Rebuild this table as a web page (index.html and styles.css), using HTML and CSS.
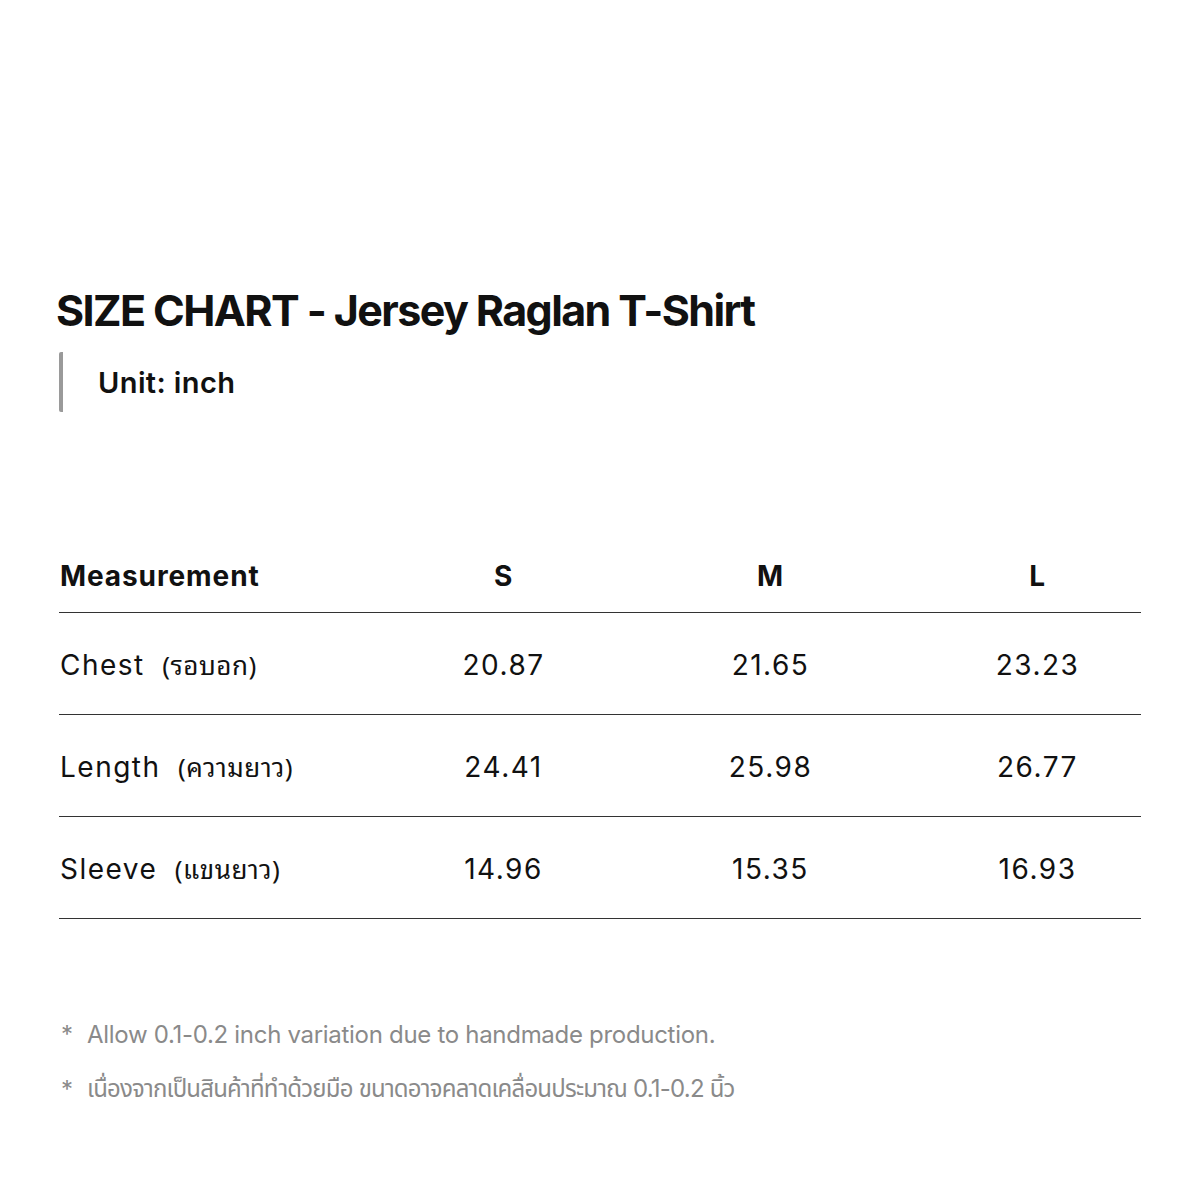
FILE: index.html
```html
<!DOCTYPE html>
<html lang="en">
<head>
<meta charset="utf-8">
<link rel="stylesheet" href="styles.css">
</head>
<body>
<main class="page">
  <h1 class="title">SIZE CHART - Jersey Raglan T-Shirt</h1>
  <div class="unit"><span class="unit-text">Unit: inch</span></div>
  <div class="table">
    <div class="row head">
      <div class="cell name">Measurement</div>
      <div class="cell">S</div>
      <div class="cell">M</div>
      <div class="cell last">L</div>
    </div>
    <div class="row">
      <div class="cell name">Chest <span class="th">(รอบอก)</span></div>
      <div class="cell">20.87</div>
      <div class="cell">21.65</div>
      <div class="cell last">23.23</div>
    </div>
    <div class="row">
      <div class="cell name">Length <span class="th">(ความยาว)</span></div>
      <div class="cell">24.41</div>
      <div class="cell">25.98</div>
      <div class="cell last">26.77</div>
    </div>
    <div class="row">
      <div class="cell name">Sleeve <span class="th">(แขนยาว)</span></div>
      <div class="cell">14.96</div>
      <div class="cell">15.35</div>
      <div class="cell last">16.93</div>
    </div>
  </div>
  <ul class="notes">
    <li><span class="star">*</span><span>Allow 0.1-0.2 inch variation due to handmade production.</span></li>
    <li><span class="star">*</span><span class="thai-note">เนื่องจากเป็นสินค้าที่ทำด้วยมือ ขนาดอาจคลาดเคลื่อนประมาณ 0.1-0.2 นิ้ว</span></li>
  </ul>
</main>
</body>
</html>
```
FILE: styles.css
```css
html, body {
  margin: 0;
  padding: 0;
  background: #ffffff;
}
body {
  font-family: Inter, "Noto Sans", "Noto Sans Thai", sans-serif;
  color: #111111;
}
.page {
  padding: 284px 59px 0 59px;
}
.title {
  margin: 0 0 0 -3px;
  font-size: 43px;
  font-weight: 700;
  letter-spacing: -1.6px;
  line-height: 52px;
}
.unit {
  margin-top: 16px;
  border-left: 4px solid #9a9a9a;
  border-radius: 2px;
  height: 60px;
  display: flex;
  align-items: center;
  padding-left: 35px;
}
.unit-text {
  font-size: 29px;
  font-weight: 600;
  letter-spacing: 0.4px;
}
.table {
  margin-top: 140px;
  width: 1082px;
}
.row {
  display: grid;
  grid-template-columns: 311px 267px 267px 237px;
  align-items: center;
  height: 102px;
  border-bottom: 1px solid #333333;
  box-sizing: border-box;
}
.row.head {
  height: 61px;
  padding-bottom: 12px;
  font-weight: 700;
}
.cell {
  text-align: center;
  font-size: 28px;
  line-height: 34px;
  letter-spacing: 1.5px;
  padding-top: 3px;
}
.cell.last {
  width: 267px;
}
.cell.name {
  text-align: left;
  padding-left: 1px;
  padding-top: 1px;
}
.head .cell {
  font-weight: 700;
  letter-spacing: 0.9px;
  padding-top: 0;
}
.th {
  margin-left: 8px;
  font-size: 26px;
  letter-spacing: 0.5px;
  font-family: "Noto Sans Thai Looped", Loma, Garuda, Sarabun, Tahoma, Inter, "Noto Sans Thai", sans-serif;
}
.notes {
  list-style: none;
  margin: 88px 0 0 0;
  padding: 0;
  color: #8a8a8a;
  font-size: 24px;
  letter-spacing: -0.3px;
}
.notes li {
  display: flex;
  height: 55px;
  align-items: center;
}
.star {
  width: 26px;
  padding-left: 2px;
}
.thai-note {
  letter-spacing: -0.8px;
}
```
